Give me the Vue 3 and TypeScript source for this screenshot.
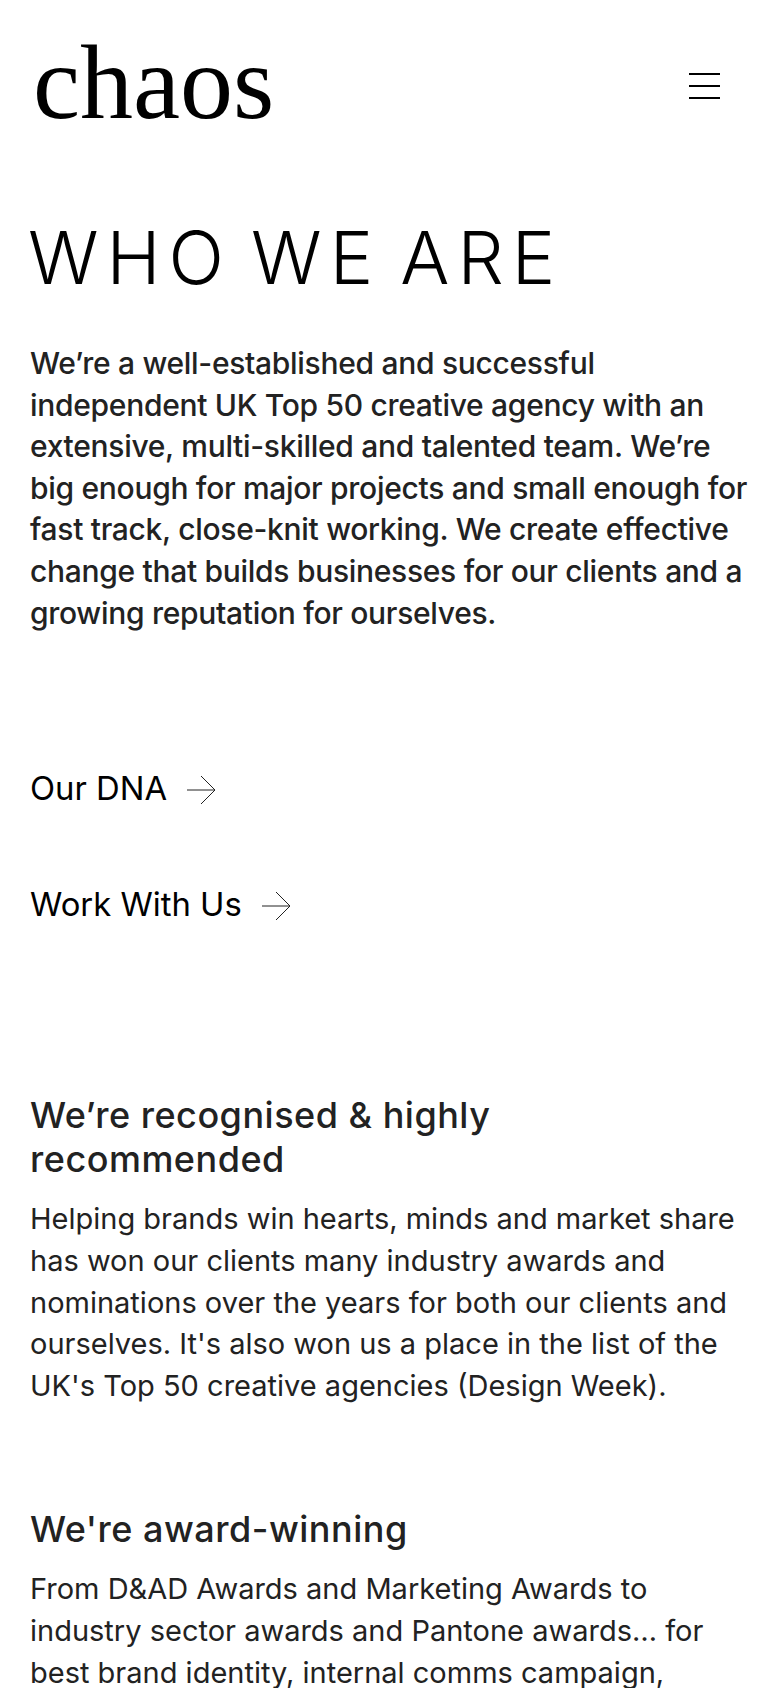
<template>
  <div class="page">
    <header class="top">
      <div class="logo">chaos</div>
      <button class="menu" aria-label="Menu"><span></span><span></span><span></span></button>
    </header>
    <h1>WHO WE ARE</h1>
    <p class="intro">We’re a well-established and successful independent UK Top 50 creative agency with an extensive, multi-skilled and talented team. We’re big enough for major projects and small enough for fast track, close-knit working. We create effective change that builds businesses for our clients and a growing reputation for ourselves.</p>
    <nav class="links">
      <a v-for="l in links" :key="l" class="link">
        {{ l }}
        <svg width="29" height="30" viewBox="0 0 29 30" fill="none" stroke="#222" stroke-width="1"><path d="M0 15h28M14 1l14 14-14 14"/></svg>
      </a>
    </nav>
    <section v-for="s in sections" :key="s.title" class="block">
      <h2>{{ s.title }}</h2>
      <p>{{ s.text }}</p>
    </section>
  </div>
</template>

<script setup lang="ts">
const links = ['Our DNA', 'Work With Us']
const sections = [
  {
    title: 'We’re recognised & highly recommended',
    text: "Helping brands win hearts, minds and market share has won our clients many industry awards and nominations over the years for both our clients and ourselves. It's also won us a place in the list of the UK's Top 50 creative agencies (Design Week)."
  },
  {
    title: "We're award-winning",
    text: 'From D&AD Awards and Marketing Awards to industry sector awards and Pantone awards… for best brand identity, internal comms campaign, website and more.'
  }
]
</script>

<style>
html, body { overflow: hidden; height: 1688px; background: #fff; }
</style>

<style scoped>
.page {
  height: 1688px;
  overflow: hidden;
  padding: 0 30px;
  box-sizing: border-box;
  font-family: Inter, sans-serif;
  color: #222;
  font-size: 29px;
  line-height: 41.6px;
}
.top {
  display: flex;
  justify-content: space-between;
  align-items: center;
  height: 172px;
}
.logo {
  font-family: "Liberation Serif", serif;
  font-size: 106px;
  color: #000;
  line-height: 1;
  margin: 0 0 7px 3px;
}
.menu {
  display: flex;
  flex-direction: column;
  gap: 10px;
  width: 31px;
  padding: 0;
  margin-right: 30px;
  border: 0;
  background: none;
}
.menu span { display: block; height: 2px; background: #000; }
h1 {
  margin: 41px 0 0 -2px;
  font-size: 73px;
  font-weight: 350;
  letter-spacing: 8px;
  word-spacing: -9.4px;
  line-height: 90px;
  color: #000;
}
.intro { margin: 40px 0 0; font-size: 30px; font-weight: 500; letter-spacing: -0.3px; }
.links { margin-top: 134px; display: flex; flex-direction: column; gap: 74px; }
.link { display: flex; align-items: center; gap: 20px; font-size: 32.8px; color: #000; }
.link svg { margin-top: 3px; }
.block { margin-top: 101px; }
.links + .block { margin-top: 168px; }
h2 { max-width: 680px; margin: 0 0 17px; font-size: 36px; font-weight: 500; line-height: 44px; letter-spacing: 0.5px; }
.block p { margin: 0; }
</style>
